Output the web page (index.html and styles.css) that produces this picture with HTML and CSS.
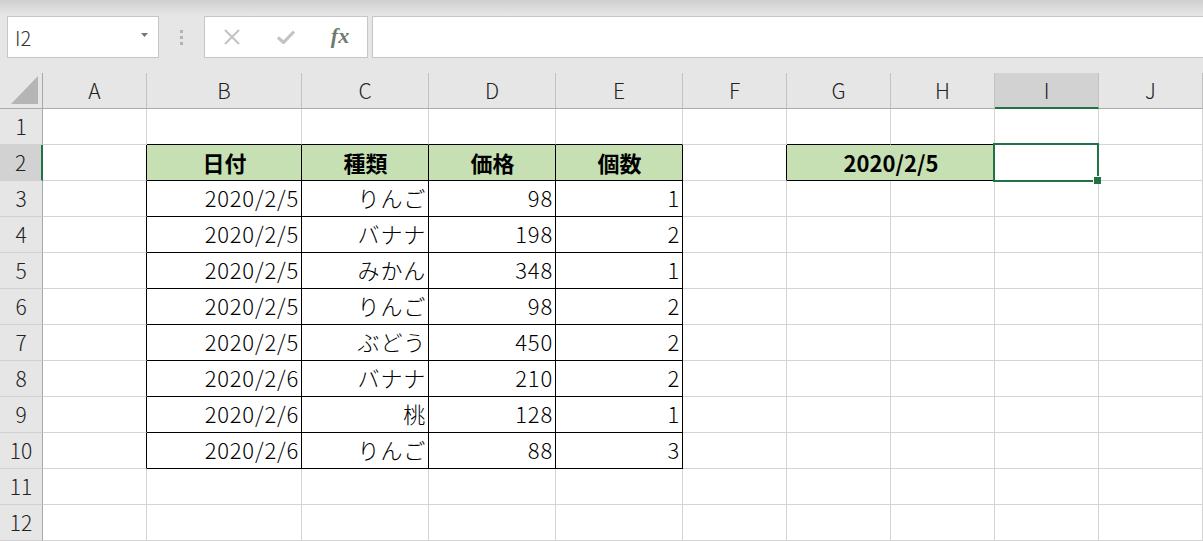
FILE: index.html
```html
<!DOCTYPE html>
<html lang="ja">
<head>
    <meta charset="UTF-8">
    <title>Book1 - Excel</title>
    <link rel="stylesheet" href="styles.css">
</head>
<body>
    <div class="formula-bar">
        <div class="name-box">
            <span>I2</span>
            <svg class="caret" width="7" height="4" viewBox="0 0 7 4"><path d="M0 0h7L3.5 4z" fill="#6e7a6e"/></svg>
        </div>
        <div class="grip"><i></i><i></i><i></i></div>
        <div class="fx-buttons">
            <div class="fx-btn">
                <svg width="16" height="16" viewBox="0 0 16 16"><path d="M1 1L15 15M15 1L1 15" stroke="#c4c4c4" stroke-width="2.2" fill="none"/></svg>
            </div>
            <div class="fx-btn">
                <svg width="18" height="14" viewBox="0 0 18 14"><path d="M1 7.5L6.5 12.5L17 1.5" stroke="#c4c4c4" stroke-width="3.2" fill="none"/></svg>
            </div>
            <div class="fx-btn"><span class="fx">fx</span></div>
        </div>
        <div class="formula-input"></div>
    </div>

    <div class="sheet">
        <div class="row head">
            <div class="corner"><svg width="28" height="29" viewBox="0 0 28 29"><path d="M27 0V28H0z" fill="#b5b5b5"/></svg></div>
            <div class="ch">A</div><div class="ch">B</div><div class="ch">C</div><div class="ch">D</div><div class="ch">E</div>
            <div class="ch">F</div><div class="ch">G</div><div class="ch">H</div><div class="ch sel">I</div><div class="ch">J</div>
        </div>
        <div class="row">
            <div class="rh">1</div>
            <div class="c"></div><div class="c bt"></div><div class="c bt"></div><div class="c bt"></div><div class="c bt"></div>
            <div class="c"></div><div class="c bt"></div><div class="c bt"></div><div class="c"></div><div class="c"></div>
        </div>
        <div class="row">
            <div class="rh sel">2</div>
            <div class="c br"></div>
            <div class="c t hd">日付</div><div class="c t hd">種類</div><div class="c t hd">価格</div><div class="c t hd">個数</div>
            <div class="c br"></div>
            <div class="c t hd merged">2020/2/5</div>
            <div class="c active"><div class="cursor"><span class="handle"></span></div></div>
            <div class="c"></div>
        </div>
        <div class="row">
            <div class="rh">3</div><div class="c br"></div>
            <div class="c t">2020/2/5</div><div class="c t">りんご</div><div class="c t">98</div><div class="c t">1</div>
            <div class="c"></div><div class="c"></div><div class="c"></div><div class="c"></div><div class="c"></div>
        </div>
        <div class="row">
            <div class="rh">4</div><div class="c br"></div>
            <div class="c t">2020/2/5</div><div class="c t">バナナ</div><div class="c t">198</div><div class="c t">2</div>
            <div class="c"></div><div class="c"></div><div class="c"></div><div class="c"></div><div class="c"></div>
        </div>
        <div class="row">
            <div class="rh">5</div><div class="c br"></div>
            <div class="c t">2020/2/5</div><div class="c t">みかん</div><div class="c t">348</div><div class="c t">1</div>
            <div class="c"></div><div class="c"></div><div class="c"></div><div class="c"></div><div class="c"></div>
        </div>
        <div class="row">
            <div class="rh">6</div><div class="c br"></div>
            <div class="c t">2020/2/5</div><div class="c t">りんご</div><div class="c t">98</div><div class="c t">2</div>
            <div class="c"></div><div class="c"></div><div class="c"></div><div class="c"></div><div class="c"></div>
        </div>
        <div class="row">
            <div class="rh">7</div><div class="c br"></div>
            <div class="c t">2020/2/5</div><div class="c t">ぶどう</div><div class="c t">450</div><div class="c t">2</div>
            <div class="c"></div><div class="c"></div><div class="c"></div><div class="c"></div><div class="c"></div>
        </div>
        <div class="row">
            <div class="rh">8</div><div class="c br"></div>
            <div class="c t">2020/2/6</div><div class="c t">バナナ</div><div class="c t">210</div><div class="c t">2</div>
            <div class="c"></div><div class="c"></div><div class="c"></div><div class="c"></div><div class="c"></div>
        </div>
        <div class="row">
            <div class="rh">9</div><div class="c br"></div>
            <div class="c t">2020/2/6</div><div class="c t">桃</div><div class="c t">128</div><div class="c t">1</div>
            <div class="c"></div><div class="c"></div><div class="c"></div><div class="c"></div><div class="c"></div>
        </div>
        <div class="row">
            <div class="rh">10</div><div class="c br"></div>
            <div class="c t">2020/2/6</div><div class="c t">りんご</div><div class="c t">88</div><div class="c t">3</div>
            <div class="c"></div><div class="c"></div><div class="c"></div><div class="c"></div><div class="c"></div>
        </div>
        <div class="row">
            <div class="rh">11</div>
            <div class="c"></div><div class="c"></div><div class="c"></div><div class="c"></div><div class="c"></div>
            <div class="c"></div><div class="c"></div><div class="c"></div><div class="c"></div><div class="c"></div>
        </div>
        <div class="row">
            <div class="rh">12</div>
            <div class="c"></div><div class="c"></div><div class="c"></div><div class="c"></div><div class="c"></div>
            <div class="c"></div><div class="c"></div><div class="c"></div><div class="c"></div><div class="c"></div>
        </div>
    </div>
</body>
</html>
```

FILE: styles.css
```css
* {
    box-sizing: border-box;
}
body {
    margin: 0;
    background-color: #e6e6e6;
    font-family: "Noto Sans CJK JP", "Noto Sans", sans-serif;
    color: #000;
    overflow: hidden;
}
.formula-bar {
    display: flex;
    align-items: stretch;
    height: 73px;
    padding: 16px 0 15px 7px;
    background: linear-gradient(to bottom, #cfcfcf 0, #e6e6e6 15px, #e6e6e6 100%);
}
.name-box {
    width: 152px;
    display: flex;
    align-items: center;
    justify-content: space-between;
    padding: 0 10px 0 7px;
    background-color: #fff;
    border: 1px solid #c6c6c6;
    font-size: 20px;
    font-weight: 300;
    color: #333;
}
.name-box .caret {
    margin-top: -4px;
}
.grip {
    width: 45px;
    display: flex;
    flex-direction: column;
    align-items: center;
    justify-content: center;
    gap: 3px;
}
.grip i {
    width: 3px;
    height: 3px;
    background-color: #b3b3b3;
}
.fx-buttons {
    width: 164px;
    display: flex;
    background-color: #fff;
    border: 1px solid #c6c6c6;
}
.fx-btn {
    width: 54px;
    display: flex;
    align-items: center;
    justify-content: center;
}
.fx {
    font-family: "Liberation Serif", serif;
    font-style: italic;
    font-weight: bold;
    font-size: 22px;
    color: #6f7a6f;
    margin-top: -3px;
}
.formula-input {
    flex: 1;
    margin-left: 4px;
    background-color: #fff;
    border: 1px solid #c6c6c6;
    border-right: none;
}

.sheet {
    background-color: #fff;
}
.row {
    display: grid;
    grid-template-columns: 43px 104px 155px 127px 127px 127px 104px 104px 104px 104px 1fr;
    height: 36px;
}
.row.head {
    background-color: #e6e6e6;
}
.corner {
    display: flex;
    align-items: flex-end;
    justify-content: flex-end;
    padding: 0 3px 3px 0;
    border-right: 1px solid #a8a8a8;
    border-bottom: 1px solid #ababab;
}
.ch {
    text-align: center;
    font-size: 21px;
    font-weight: 300;
    line-height: 34px;
    color: #222;
    border-right: 1px solid #c2c2c2;
    border-bottom: 1px solid #ababab;
}
.ch.sel {
    background-color: #d2d2d2;
    border-bottom: 2px solid #217346;
}
.rh {
    text-align: center;
    font-size: 21px;
    font-weight: 300;
    line-height: 35px;
    color: #222;
    background-color: #e6e6e6;
    border-right: 1px solid #a8a8a8;
    border-bottom: 1px solid #d0d0d0;
}
.rh.sel {
    background-color: #d2d2d2;
    border-right: 2px solid #217346;
}
.c {
    position: relative;
    border-right: 1px solid #d4d4d4;
    border-bottom: 1px solid #d4d4d4;
    font-size: 22px;
    font-weight: 300;
    line-height: 33px;
    letter-spacing: 0.8px;
    text-align: right;
    padding: 0 2px 0 3px;
    white-space: nowrap;
}
.c.bt {
    border-bottom-color: #000;
}
.c.br {
    border-right-color: #000;
}
.c.t {
    border-right-color: #000;
    border-bottom-color: #000;
}
.c.hd {
    background-color: #c6e0b4;
    font-weight: bold;
    text-align: center;
    line-height: 35px;
    letter-spacing: 0;
}
.c.merged {
    grid-column: span 2;
}
.cursor {
    position: absolute;
    z-index: 2;
    left: -2px;
    top: -2px;
    width: 106px;
    height: 39px;
    border: 2px solid #217346;
}
.handle {
    position: absolute;
    right: -4px;
    bottom: -4px;
    width: 8px;
    height: 8px;
    background-color: #217346;
    border-left: 1px solid #fff;
    border-top: 1px solid #fff;
}
```
